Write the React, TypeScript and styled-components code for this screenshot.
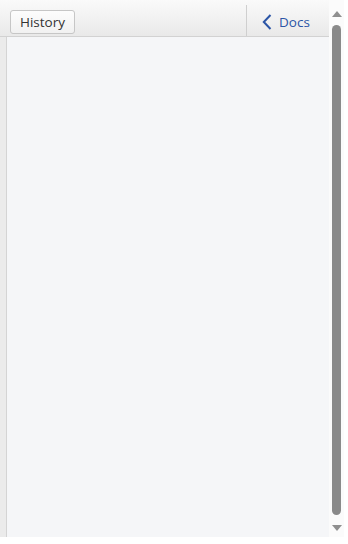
import React from "react";
import styled, { createGlobalStyle } from "styled-components";

const Global = createGlobalStyle`
  html, body { margin: 0; padding: 0; background: #ffffff; }
  body { font-family: "Open Sans", "Noto Sans", "Liberation Sans", sans-serif; }
`;

const Frame = styled.div`
  width: 344px;
  height: 537px;
  display: flex;
  background: #ffffff;
`;

const Content = styled.div`
  flex: 1;
  display: flex;
  flex-direction: column;
  background: #f5f6f8;
`;

const Toolbar = styled.div`
  display: flex;
  align-items: stretch;
  height: 36px;
  flex: none;
  background: linear-gradient(#fafafa, #e9e9e9);
  border-bottom: 1px solid #d2d2d2;
`;

const Left = styled.div`
  flex: 1;
  display: flex;
  align-items: flex-start;
  padding: 10px 0 0 10px;
  box-sizing: border-box;
`;

const Button = styled.button`
  height: 24px;
  padding: 0 9px;
  border: 1px solid #c6c6c6;
  border-radius: 3px;
  background: linear-gradient(#fdfdfd, #f1f1f1);
  color: #333;
  font-family: "Open Sans", "Noto Sans", sans-serif;
  font-size: 13.5px;
  line-height: 22px;
`;

const DocsLink = styled.div`
  display: flex;
  align-items: center;
  gap: 7px;
  width: 83px;
  padding: 2px 0 0 15px;
  box-sizing: border-box;
  border-left: 1px solid #cfcfcf;
  margin-top: 5px;
  color: #2b55a6;
  font-size: 13.5px;
`;

const Body = styled.div`
  flex: 1;
  display: flex;
`;

const Strip = styled.div`
  width: 6px;
  background: #ebebeb;
  border-right: 1px solid #d4d4d4;
`;

const Main = styled.div`
  flex: 1;
  background: #f5f6f8;
`;

const Scrollbar = styled.div`
  width: 15px;
  flex: none;
  display: flex;
  flex-direction: column;
  align-items: center;
  background: #fbfbfb;
`;

const Arrow = styled.div<{ $down?: boolean }>`
  width: 15px;
  height: ${(p) => (p.$down ? "15px" : "19px")};
  flex: none;
  display: flex;
  align-items: ${(p) => (p.$down ? "flex-start" : "flex-end")};
  justify-content: center;
  padding: ${(p) => (p.$down ? "3px 0 0" : "0 0 2px")};
  box-sizing: border-box;
`;

const Thumb = styled.div`
  flex: 1;
  width: 9px;
  margin: 6px 0 7px;
  background: #8a8a8a;
  border-radius: 5px;
`;

export default function App() {
  return (
    <>
      <Global />
      <Frame>
        <Content>
          <Toolbar>
            <Left>
              <Button>History</Button>
            </Left>
            <DocsLink>
              <svg width="10" height="16" viewBox="0 0 10 16">
                <path d="M8.5 1 L1.8 8 L8.5 15" fill="none" stroke="#2b55a6" strokeWidth="2" />
              </svg>
              <span>Docs</span>
            </DocsLink>
          </Toolbar>
          <Body>
            <Strip />
            <Main />
          </Body>
        </Content>
        <Scrollbar>
          <Arrow>
            <svg width="10" height="6" viewBox="0 0 10 6">
              <path d="M5 0 L10 6 L0 6 Z" fill="#8f8f8f" />
            </svg>
          </Arrow>
          <Thumb />
          <Arrow $down>
            <svg width="10" height="6" viewBox="0 0 10 6">
              <path d="M0 0 L10 0 L5 6 Z" fill="#8f8f8f" />
            </svg>
          </Arrow>
        </Scrollbar>
      </Frame>
    </>
  );
}
